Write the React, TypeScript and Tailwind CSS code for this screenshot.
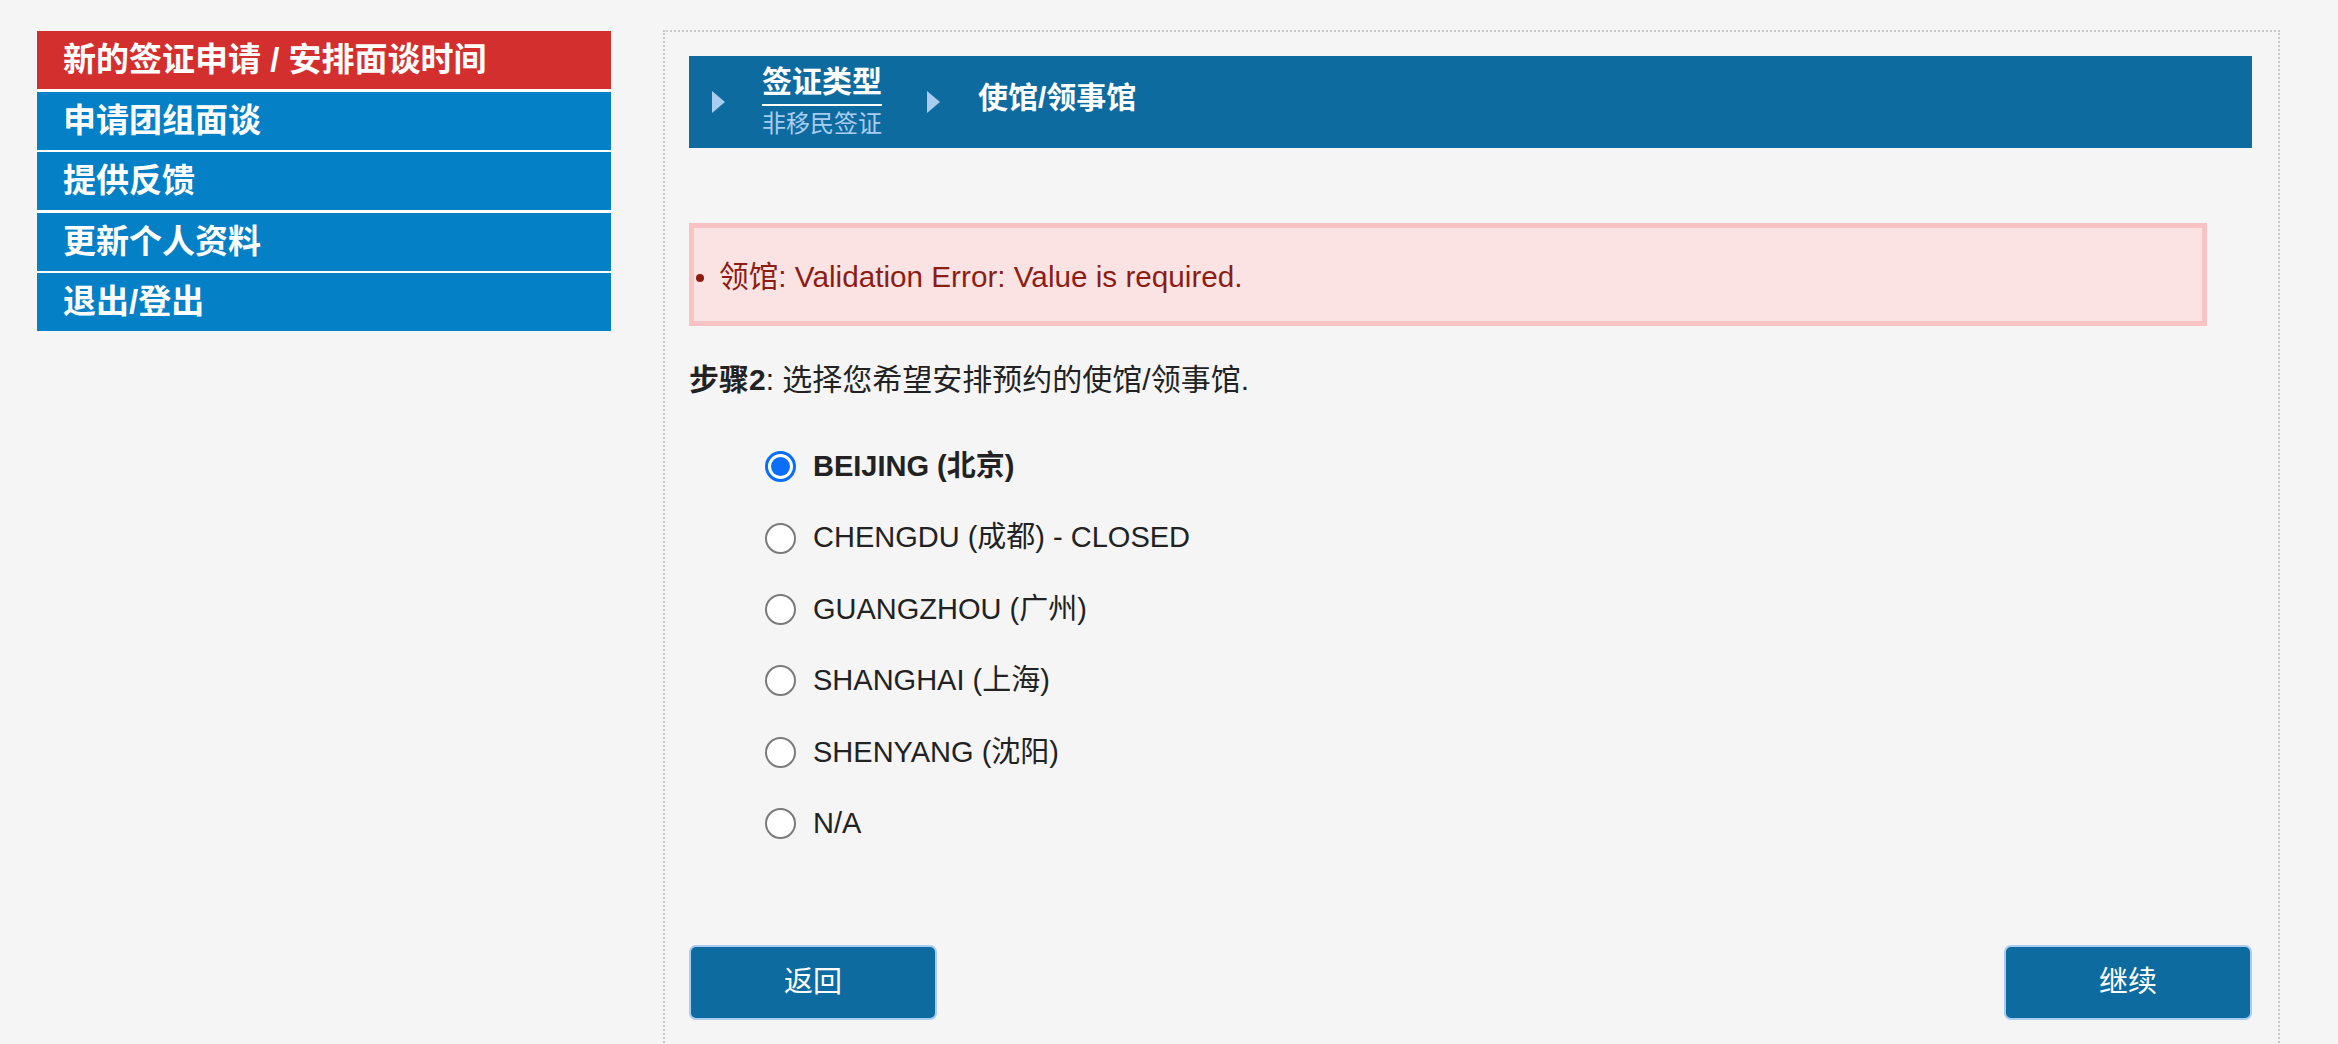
import React from 'react';

const menuItems = [
    { label: '新的签证申请 / 安排面谈时间', active: true },
    { label: '申请团组面谈', active: false },
    { label: '提供反馈', active: false },
    { label: '更新个人资料', active: false },
    { label: '退出/登出', active: false },
];

const posts = [
    { label: 'BEIJING (北京)', checked: true },
    { label: 'CHENGDU (成都) - CLOSED', checked: false },
    { label: 'GUANGZHOU (广州)', checked: false },
    { label: 'SHANGHAI (上海)', checked: false },
    { label: 'SHENYANG (沈阳)', checked: false },
    { label: 'N/A', checked: false },
];

const Arrow = () => (
    <svg width="13" height="22" viewBox="0 0 13 22" className="shrink-0">
        <polygon points="0,0 13,11 0,22" fill="#a9cdf0" />
    </svg>
);

const Radio = ({ checked }: { checked: boolean }) =>
    checked ? (
        <span className="flex h-[31px] w-[31px] shrink-0 items-center justify-center rounded-full border-[3px] border-[#0a6ef9] bg-white">
            <span className="h-[19px] w-[19px] rounded-full bg-[#0a6ef9]" />
        </span>
    ) : (
        <span className="h-[31px] w-[31px] shrink-0 rounded-full border-2 border-[#7a7a7a] bg-white" />
    );

const Sidebar = () => (
    <nav className="mt-[1px] flex w-[574px] shrink-0 flex-col gap-[2.5px] self-start bg-white">
        {menuItems.map((item) => (
            <div
                key={item.label}
                className={
                    item.active
                        ? 'flex h-[58px] items-center bg-[#d32f2f] pl-[26px] text-[33px] font-bold text-white'
                        : 'flex h-[58px] items-center bg-[#0380c6] pl-[26px] text-[33px] font-bold text-white'
                }
            >
                {item.label}
            </div>
        ))}
    </nav>
);

export default function App() {
    return (
        <div
            className="flex min-h-screen gap-[52px] bg-[#f5f5f5] pl-[37px] pt-[30px] text-[#222]"
            style={{ fontFamily: '"Liberation Sans", "Noto Sans CJK SC", sans-serif' }}
        >
            <Sidebar />

            <main className="w-[1617px] shrink-0 border-2 border-dotted border-[#c8c8c8] px-[24px] pb-[60px] pt-[24px]">
                {/* breadcrumb */}
                <div className="flex h-[92px] w-[1563px] items-center bg-[#0e6ba0] pl-[23px]">
                    <Arrow />
                    <div className="ml-[37px] flex flex-col">
                        <span className="border-b-2 border-white pb-[5px] text-[30px] font-bold leading-[34px] text-white">签证类型</span>
                        <span className="mt-[3px] text-[24px] leading-[30px] text-[#a9cdf0]">非移民签证</span>
                    </div>
                    <div className="ml-[45px]">
                        <Arrow />
                    </div>
                    <span className="mb-[8px] ml-[38px] text-[30px] font-bold leading-[34px] text-white">使馆/领事馆</span>
                </div>

                {/* error */}
                <div className="mt-[75px] flex h-[103px] w-[1518px] items-center border-[5px] border-[#f9c3c4] bg-[#fbe3e4] pt-[6px] text-[29.7px] text-[#8b1d13]">
                    <span className="ml-[2px] h-[8px] w-[8px] rounded-full bg-[#8b1d13]" />
                    <span className="ml-[15px]">领馆: Validation Error: Value is required.</span>
                </div>

                <p className="mt-[36px] text-[30px] leading-[36px]">
                    <b>步骤2</b>: 选择您希望安排预约的使馆/领事馆.
                </p>

                <div className="mt-[33px] flex flex-col pl-[76px]">
                    {posts.map((p) => (
                        <label key={p.label} className="flex h-[71.4px] items-center gap-[17px] text-[29px]">
                            <Radio checked={p.checked} />
                            <span className={p.checked ? 'font-bold' : ''}>{p.label}</span>
                        </label>
                    ))}
                </div>

                <div className="mt-[86px] flex w-[1563px] justify-between">
                    <button className="flex h-[75px] w-[248px] items-center justify-center rounded-[7px] border-2 border-[#a9cdf0] bg-[#0e6ba0] text-[29px] text-white">
                        返回
                    </button>
                    <button className="flex h-[75px] w-[248px] items-center justify-center rounded-[7px] border-2 border-[#a9cdf0] bg-[#0e6ba0] text-[29px] text-white">
                        继续
                    </button>
                </div>
            </main>
        </div>
    );
}
